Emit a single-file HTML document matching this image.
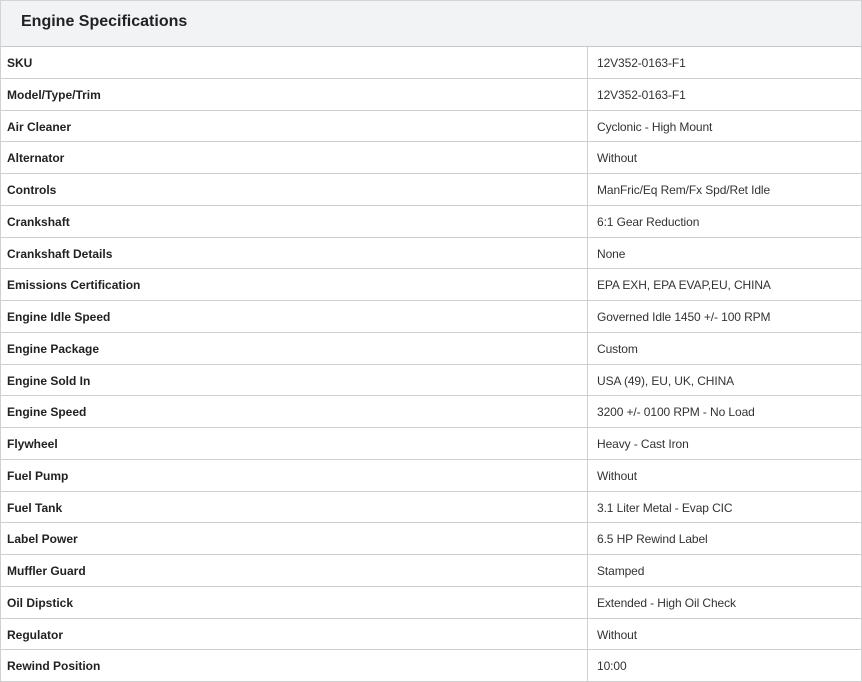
<!DOCTYPE html>
<html><head><meta charset="utf-8"><style>
*{margin:0;padding:0;box-sizing:border-box}
body{width:862px;height:681px;overflow:hidden;background:#fff;font-family:"Liberation Sans",Arial,sans-serif;position:relative}
.hd{position:absolute;left:0;top:0;width:862px;height:47px;background:#f2f3f5;border:1px solid #d4d4d4;border-bottom:1px solid #c8c8c8}
.hd span{position:absolute;left:20px;top:12px;font-size:16px;font-weight:bold;color:#222}
.r{position:absolute;left:0;width:862px;border-left:1px solid #d0d0d0;border-right:1px solid #d0d0d0;border-bottom:1px solid #cfcfcf;font-size:12px}
.r b{position:absolute;left:6px;top:0;padding-top:1px;color:#222}
.r i{font-style:normal;position:absolute;left:596px;top:0;padding-top:1px;color:#333;letter-spacing:-0.1px}
.r:before{content:"";position:absolute;left:586px;top:0;bottom:0;border-left:1px solid #d0d0d0}
</style></head><body>
<div class="hd"><span>Engine Specifications</span></div>
<div id="t"></div>
<script>
var d=[["SKU","12V352-0163-F1"],["Model/Type/Trim","12V352-0163-F1"],["Air Cleaner","Cyclonic - High Mount"],["Alternator","Without"],["Controls","ManFric/Eq Rem/Fx Spd/Ret Idle"],["Crankshaft","6:1 Gear Reduction"],["Crankshaft Details","None"],["Emissions Certification","EPA EXH, EPA EVAP,EU, CHINA"],["Engine Idle Speed","Governed Idle 1450 +/- 100 RPM"],["Engine Package","Custom"],["Engine Sold In","USA (49), EU, UK, CHINA"],["Engine Speed","3200 +/- 0100 RPM - No Load"],["Flywheel","Heavy - Cast Iron"],["Fuel Pump","Without"],["Fuel Tank","3.1 Liter Metal - Evap CIC"],["Label Power","6.5 HP Rewind Label"],["Muffler Guard","Stamped"],["Oil Dipstick","Extended - High Oil Check"],["Regulator","Without"],["Rewind Position","10:00"]];
var h="";for(var i=0;i<d.length;i++){var t=Math.round(47+i*31.75),b=Math.round(47+(i+1)*31.75)-1,hh=b-t+1;h+='<div class="r" style="top:'+t+'px;height:'+hh+'px;line-height:'+(hh-1)+'px"><b>'+d[i][0]+'</b><i>'+d[i][1]+'</i></div>';}
document.getElementById("t").innerHTML=h;
</script>
</body></html>
